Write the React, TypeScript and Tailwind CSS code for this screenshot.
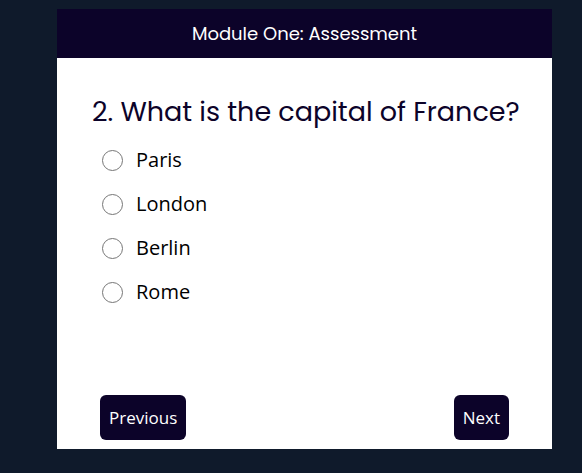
import React from 'react';

const OPTIONS = ['Paris', 'London', 'Berlin', 'Rome'];

const poppins = { fontFamily: 'Poppins, "Noto Sans", Lato, sans-serif' };

export default function App() {
  return (
    <div className="w-[582px] h-[473px] bg-[#0f1a2b] pt-[9px] pl-[57px]">
      <div className="w-[495px] h-[440px] bg-white flex flex-col">
        {/* header */}
        <div
          className="h-[49px] bg-[#0c0329] text-white flex items-center justify-center text-[18px]"
          style={poppins}
        >
          Module One: Assessment
        </div>

        <div className="flex-1 flex flex-col pl-[35px] pr-[20px] pt-[35px]">
          <h2 className="text-[27px] leading-[38px] text-[#0c0329] whitespace-nowrap" style={poppins}>
            2. What is the capital of France?
          </h2>

          <div className="flex flex-col gap-[12px] mt-[13px] pl-[10px] font-['Open_Sans','Noto_Sans',sans-serif]">
            {OPTIONS.map((o) => (
              <label key={o} className="flex items-center gap-[13px] h-[32px] text-[20px] text-black">
                <span className="w-[21px] h-[21px] rounded-full border border-[#767676] bg-white" />
                {o}
              </label>
            ))}
          </div>
        </div>

        <div className="flex justify-between items-center px-[43px] pb-[9px] font-['Open_Sans','Noto_Sans',sans-serif]">
          <button className="h-[45px] px-[9px] rounded-[6px] bg-[#0c0329] text-white text-[17px]">
            Previous
          </button>
          <button className="h-[45px] px-[9px] rounded-[6px] bg-[#0c0329] text-white text-[17px]">
            Next
          </button>
        </div>
      </div>
    </div>
  );
}
